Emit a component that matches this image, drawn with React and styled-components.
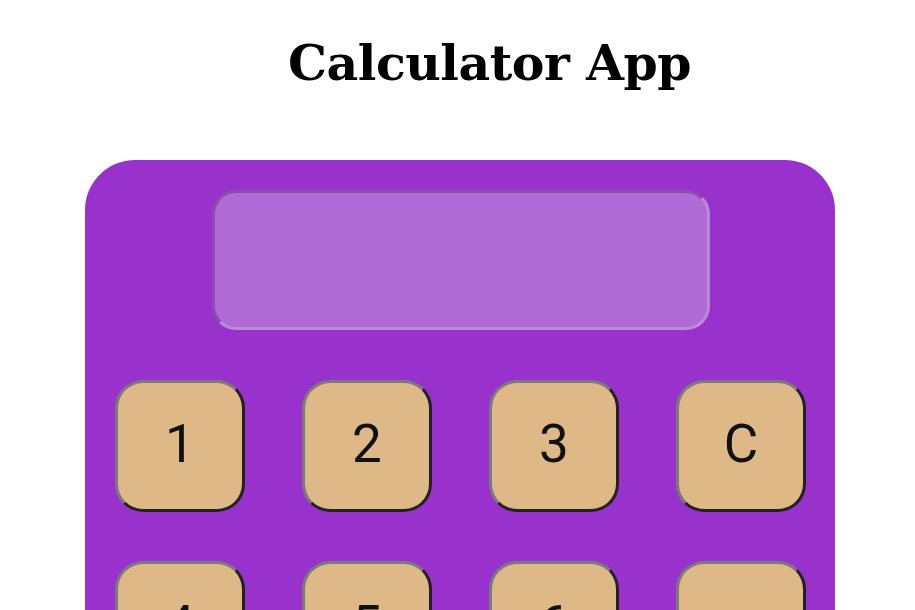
import React from 'react';
import styled, { createGlobalStyle } from 'styled-components';

const GlobalStyle = createGlobalStyle`
  body {
    margin: 0;
    background: #ffffff;
    overflow: hidden;
  }
`;

const Page = styled.div`
  width: 915px;
  height: 610px;
  display: flex;
  flex-direction: column;
`;

const Title = styled.h1`
  margin: 28px 0 0 0;
  padding-left: 64px;
  text-align: center;
  font-family: 'DejaVu Serif', serif;
  font-weight: 700;
  font-size: 49px;
  line-height: 70px;
  color: #000;
  letter-spacing: -0.5px;
`;

const Calculator = styled.div`
  margin: 62px 0 0 85px;
  width: 750px;
  height: 700px;
  box-sizing: border-box;
  padding: 30px 29px 0 30px;
  background: #9932cc;
  border-radius: 50px;
  display: flex;
  flex-direction: column;
  align-items: center;
  gap: 50px;
`;

const Display = styled.div`
  width: 498px;
  height: 140px;
  box-sizing: border-box;
  border-radius: 24px;
  background: #b06bd6;
  border: 3px solid;
  border-color: #8a4fa8 #b98ad6 #b98ad6 #8a4fa8;
`;

const Keys = styled.div`
  align-self: stretch;
  display: grid;
  grid-template-columns: repeat(4, 130px);
  justify-content: space-between;
  row-gap: 49px;
`;

const Key = styled.button`
  width: 130px;
  height: 132px;
  box-sizing: border-box;
  border-radius: 28px;
  background: #deb887;
  border: 3px solid;
  border-color: #7a7a7a #222 #222 #7a7a7a;
  font-family: Roboto, 'Liberation Sans', sans-serif;
  font-size: 53px;
  color: #111;
  display: flex;
  align-items: center;
  justify-content: center;
  padding: 0 0 4px 0;
`;

const keys = ['1', '2', '3', 'C', '4', '5', '6', '+'];

export default function App() {
  return (
    <Page>
      <GlobalStyle />
      <Title>Calculator App</Title>
      <Calculator>
        <Display />
        <Keys>
          {keys.map(k => (
            <Key key={k}>{k}</Key>
          ))}
        </Keys>
      </Calculator>
    </Page>
  );
}
